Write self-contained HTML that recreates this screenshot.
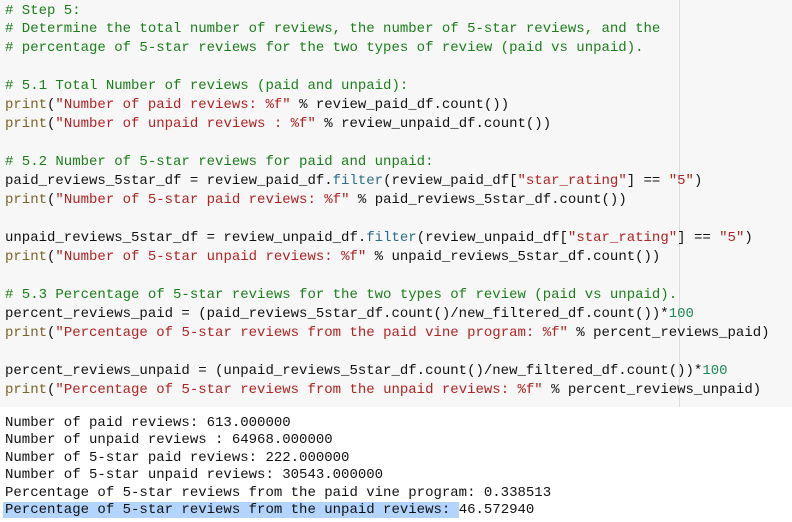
<!DOCTYPE html>
<html><head><style>
html,body{margin:0;padding:0;background:#fff;width:792px;height:522px;overflow:hidden}
.code{position:absolute;left:0;top:0;width:792px;height:407px;background:#f7f7f7}
.code pre{margin:0;position:absolute;left:5px;top:1.5px;font-family:"Liberation Mono",monospace;font-size:14px;line-height:18.95px;color:#111;}
.ruler{position:absolute;left:679px;top:0;width:1px;height:407px;background:#ddd}
.c{color:#1a7f1a}.s{color:#b22222}.b{color:#7a6424}.n{color:#1a8a5a}.f{color:#2a6e8a}
.out{margin:0;position:absolute;left:5px;top:415px;font-family:"Liberation Mono",monospace;font-size:14px;line-height:17.4px;color:#111}
.hl{background:#b3d4fc;margin-left:-2px;padding-left:2px}
</style></head><body>
<div class="code"><div class="ruler"></div><pre><span class="c"># Step 5:
# Determine the total number of reviews, the number of 5-star reviews, and the
# percentage of 5-star reviews for the two types of review (paid vs unpaid).</span>

<span class="c"># 5.1 Total Number of reviews (paid and unpaid):</span>
<span class="b">print</span>(<span class="s">"Number of paid reviews: %f"</span> % review_paid_df.count())
<span class="b">print</span>(<span class="s">"Number of unpaid reviews : %f"</span> % review_unpaid_df.count())

<span class="c"># 5.2 Number of 5-star reviews for paid and unpaid:</span>
paid_reviews_5star_df = review_paid_df.<span class="f">filter</span>(review_paid_df[<span class="s">"star_rating"</span>] == <span class="s">"5"</span>)
<span class="b">print</span>(<span class="s">"Number of 5-star paid reviews: %f"</span> % paid_reviews_5star_df.count())

unpaid_reviews_5star_df = review_unpaid_df.<span class="f">filter</span>(review_unpaid_df[<span class="s">"star_rating"</span>] == <span class="s">"5"</span>)
<span class="b">print</span>(<span class="s">"Number of 5-star unpaid reviews: %f"</span> % unpaid_reviews_5star_df.count())

<span class="c"># 5.3 Percentage of 5-star reviews for the two types of review (paid vs unpaid).</span>
percent_reviews_paid = (paid_reviews_5star_df.count()/new_filtered_df.count())*<span class="n">100</span>
<span class="b">print</span>(<span class="s">"Percentage of 5-star reviews from the paid vine program: %f"</span> % percent_reviews_paid)

percent_reviews_unpaid = (unpaid_reviews_5star_df.count()/new_filtered_df.count())*<span class="n">100</span>
<span class="b">print</span>(<span class="s">"Percentage of 5-star reviews from the unpaid reviews: %f"</span> % percent_reviews_unpaid)</pre></div>
<pre class="out">Number of paid reviews: 613.000000
Number of unpaid reviews : 64968.000000
Number of 5-star paid reviews: 222.000000
Number of 5-star unpaid reviews: 30543.000000
Percentage of 5-star reviews from the paid vine program: 0.338513
<span class="hl">Percentage of 5-star reviews from the unpaid reviews: </span>46.572940</pre>
</body></html>
